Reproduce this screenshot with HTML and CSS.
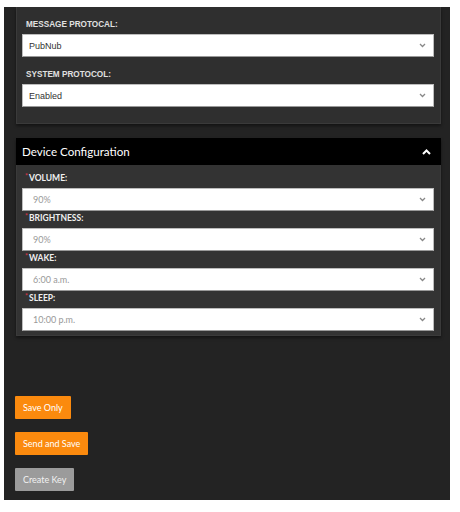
FILE: index.html
```html
<!DOCTYPE html>
<html>
<head>
<meta charset="utf-8">
<link rel="stylesheet" href="styles.css">
</head>
<body>
<div class="screen">
  <section class="card card-top">
    <div class="plabel">MESSAGE PROTOCAL:</div>
    <div class="select dark-text"><span>PubNub</span><svg class="chev" width="7" height="5" viewBox="0 0 7 5"><path d="M1 1 L3.5 3.5 L6 1" fill="none" stroke="#888" stroke-width="1.3"/></svg></div>
    <div class="plabel second">SYSTEM PROTOCOL:</div>
    <div class="select dark-text"><span>Enabled</span><svg class="chev" width="7" height="5" viewBox="0 0 7 5"><path d="M1 1 L3.5 3.5 L6 1" fill="none" stroke="#888" stroke-width="1.3"/></svg></div>
  </section>

  <section class="card card-device">
    <header class="card-head">
      <span>Device Configuration</span>
      <svg width="9" height="6" viewBox="0 0 9 6"><path d="M1 5 L4.5 1.5 L8 5" fill="none" stroke="#fff" stroke-width="2"/></svg>
    </header>
    <div class="card-body">
      <div class="flabel"><span class="req">*</span>VOLUME:</div>
      <div class="select light-text"><span>90%</span><svg class="chev" width="7" height="5" viewBox="0 0 7 5"><path d="M1 1 L3.5 3.5 L6 1" fill="none" stroke="#888" stroke-width="1.3"/></svg></div>
      <div class="flabel"><span class="req">*</span>BRIGHTNESS:</div>
      <div class="select light-text"><span>90%</span><svg class="chev" width="7" height="5" viewBox="0 0 7 5"><path d="M1 1 L3.5 3.5 L6 1" fill="none" stroke="#888" stroke-width="1.3"/></svg></div>
      <div class="flabel"><span class="req">*</span>WAKE:</div>
      <div class="select light-text"><span>6:00 a.m.</span><svg class="chev" width="7" height="5" viewBox="0 0 7 5"><path d="M1 1 L3.5 3.5 L6 1" fill="none" stroke="#888" stroke-width="1.3"/></svg></div>
      <div class="flabel"><span class="req">*</span>SLEEP:</div>
      <div class="select light-text"><span>10:00 p.m.</span><svg class="chev" width="7" height="5" viewBox="0 0 7 5"><path d="M1 1 L3.5 3.5 L6 1" fill="none" stroke="#888" stroke-width="1.3"/></svg></div>
    </div>
  </section>

  <div class="actions">
    <button class="btn btn-orange">Save Only</button>
    <button class="btn btn-orange">Send and Save</button>
    <button class="btn btn-gray">Create Key</button>
  </div>
</div>
</body>
</html>
```
FILE: styles.css
```css
html, body {
  margin: 0;
  padding: 0;
  background: #fff;
}
body {
  padding: 7px 0 0 4px;
  font-family: "Liberation Sans", Arial, sans-serif;
}
.screen {
  width: 446px;
  height: 493px;
  box-sizing: border-box;
  background: #232323;
  padding: 0 9px 0 12px;
  overflow: hidden;
  display: flex;
  flex-direction: column;
}
.card {
  background: #2f2f2f;
  border: 1px solid #3a3a3a;
  box-shadow: 0 2px 3px rgba(0,0,0,0.45);
}
.card-top {
  border-top: none;
  padding: 12px 6px 16px 5px;
}
.plabel {
  font-family: "Liberation Sans", Arial, sans-serif;
  font-weight: bold;
  font-size: 8.2px;
  line-height: 12px;
  color: #e0e0e0;
  padding-left: 4px;
  margin-bottom: 3px;
}
.plabel.second {
  margin-top: 12px;
}
.select {
  height: 23px;
  box-sizing: border-box;
  background: #fff;
  border: 1px solid #bdbdbd;
  border-bottom-color: #999;
  display: flex;
  align-items: center;
  justify-content: space-between;
  padding: 0 7px 0 6px;
  font-size: 9px;
}
.dark-text {
  color: #333;
  font-family: "Liberation Sans", Arial, sans-serif;
}
.light-text {
  color: #999;
  font-family: Lato, "Open Sans", sans-serif;
  padding-left: 10px;
}
.chev {
  display: block;
}
.card-device {
  margin-top: 14px;
  border-top: none;
  background: #333;
}
.card-head {
  height: 27px;
  background: #000;
  display: flex;
  align-items: center;
  justify-content: space-between;
  padding: 0 10px 0 6px;
  margin: 0 -1px;
  color: #fff;
  font-family: Lato, "Open Sans", sans-serif;
  font-size: 11.6px;
}
.card-head svg {
  display: block;
}
.card-body {
  padding: 6px 6px 4px 5px;
}
.flabel {
  height: 17px;
  box-sizing: border-box;
  padding-top: 1px;
  line-height: 12px;
  font-family: Lato, "Open Sans", sans-serif;
  font-weight: bold;
  font-size: 8.5px;
  color: #f0f0f0;
  padding-left: 3px;
}
.req {
  color: #d0334a;
  font-size: 7px;
  vertical-align: top;
  line-height: 8px;
  margin-right: 1px;
}
.actions {
  margin-top: 60px;
  margin-left: -1px;
  display: flex;
  flex-direction: column;
  align-items: flex-start;
  gap: 13px;
}
.btn {
  height: 23px;
  border: none;
  border-radius: 1px;
  padding: 0 8px;
  font-family: Lato, "Open Sans", sans-serif;
  font-size: 9px;
  color: #fff;
  cursor: pointer;
}
.btn-orange {
  background: #fb8a0e;
}
.btn-gray {
  background: #9b9b9b;
  color: #f2f2f2;
}
```
